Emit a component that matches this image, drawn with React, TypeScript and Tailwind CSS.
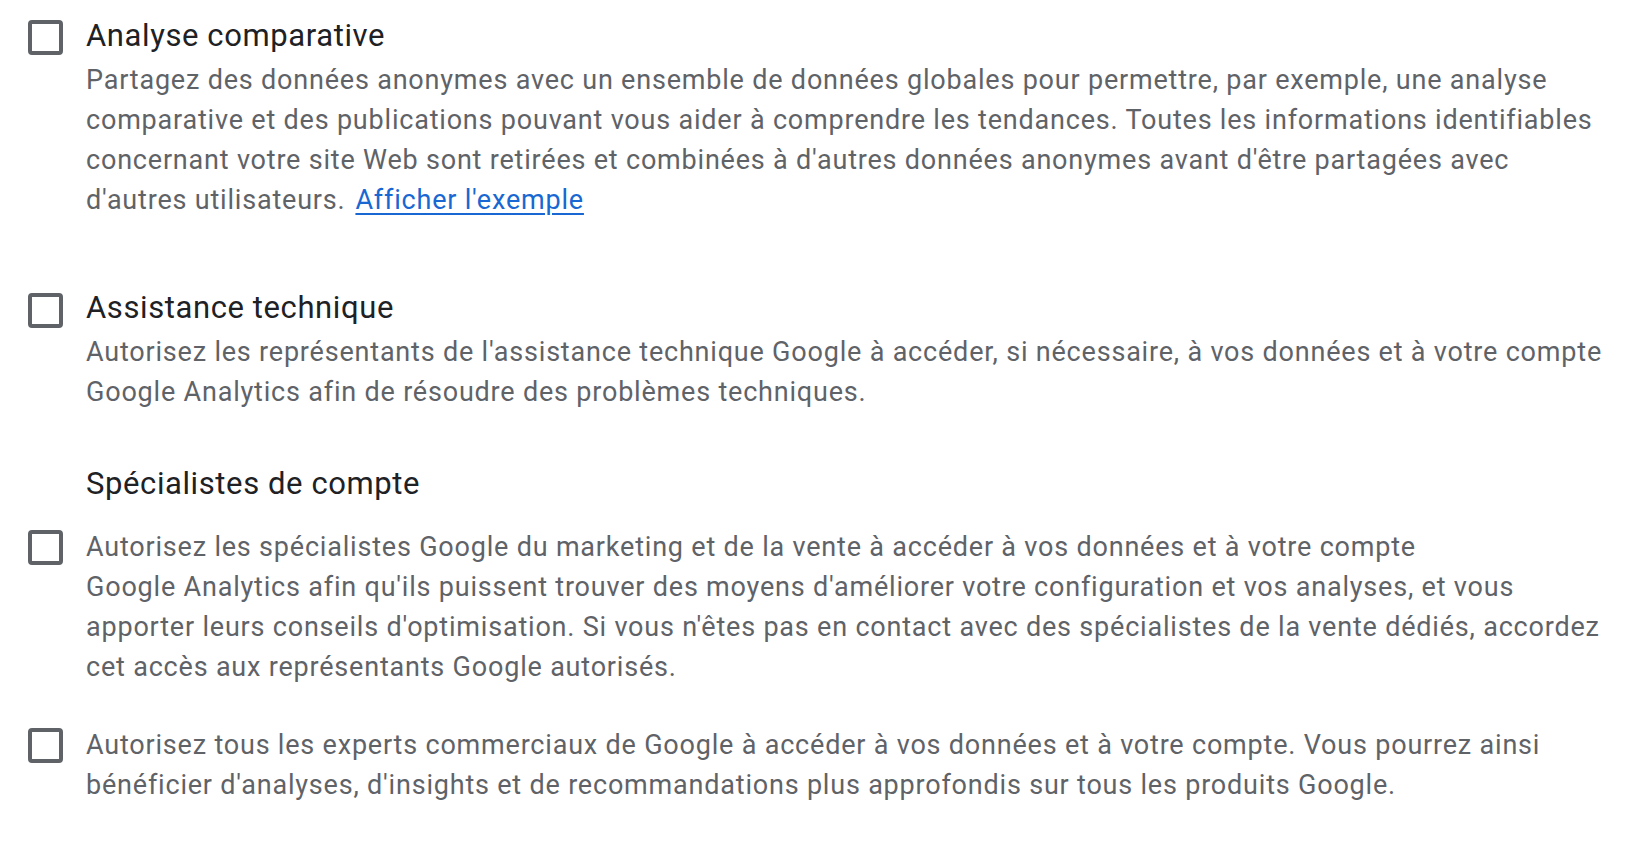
import { useState } from "react";

function Checkbox({ checked, onChange }: { checked: boolean; onChange: () => void }) {
  return (
    <button
      role="checkbox"
      aria-checked={checked}
      onClick={onChange}
      className={
        "h-[35px] w-[35px] shrink-0 rounded-[4px] border-[4px] border-[#5f6368] " +
        (checked ? "bg-[#5f6368]" : "bg-white")
      }
    />
  );
}

export default function App() {
  const [checked, setChecked] = useState<Record<string, boolean>>({});
  const toggle = (k: string) => setChecked((c) => ({ ...c, [k]: !c[k] }));

  return (
    <div className="min-h-screen bg-white pl-[28px] pr-[27px] pt-[12px] font-['Roboto',sans-serif]">
      {/* Analyse comparative */}
      <div className="flex gap-[23px]">
        <div className="pt-[8px]">
          <Checkbox checked={!!checked.bench} onChange={() => toggle("bench")} />
        </div>
        <div>
          <h3 className="text-[31px] leading-[48px] tracking-[0.6px] text-[#202124]">Analyse comparative</h3>
          <p className="text-[27px] leading-[40px] tracking-[0.8px] text-[#5f6368]">
            Partagez des données anonymes avec un ensemble de données globales pour permettre, par exemple, une
            analyse comparative et des publications pouvant vous aider à comprendre les tendances. Toutes les
            informations identifiables concernant votre site Web sont retirées et combinées à d'autres données
            anonymes avant d'être partagées avec d'autres utilisateurs.
            <a href="#" className="ml-[10px] text-[#1967d2] underline underline-offset-[4px]">
              Afficher l'exemple
            </a>
          </p>
        </div>
      </div>

      {/* Assistance technique */}
      <div className="mt-[64px] flex gap-[23px]">
        <div className="pt-[9px]">
          <Checkbox checked={!!checked.support} onChange={() => toggle("support")} />
        </div>
        <div>
          <h3 className="text-[31px] leading-[48px] tracking-[0.6px] text-[#202124]">Assistance technique</h3>
          <p className="text-[27px] leading-[40px] tracking-[0.8px] text-[#5f6368]">
            Autorisez les représentants de l'assistance technique Google à accéder, si nécessaire, à vos données et à
            votre compte Google Analytics afin de résoudre des problèmes techniques.
          </p>
        </div>
      </div>

      {/* Spécialistes de compte */}
      <h3 className="mt-[48px] pl-[58px] text-[31px] leading-[48px] tracking-[0.6px] text-[#202124]">
        Spécialistes de compte
      </h3>

      <div className="mt-[19px] flex gap-[23px]">
        <div className="pt-[3px]">
          <Checkbox checked={!!checked.sales} onChange={() => toggle("sales")} />
        </div>
        <p className="text-[27px] leading-[40px] tracking-[0.8px] text-[#5f6368]">
          Autorisez les spécialistes Google du marketing et de la vente à accéder à vos données et à votre compte
          Google{"\u00a0"}Analytics afin qu'ils puissent trouver des moyens d'améliorer votre configuration et vos
          analyses, et vous apporter leurs conseils d'optimisation. Si vous n'êtes pas en contact avec des
          spécialistes de la vente dédiés, accordez cet accès aux représentants Google autorisés.
        </p>
      </div>

      <div className="mt-[38px] flex gap-[23px]">
        <div className="pt-[3px]">
          <Checkbox checked={!!checked.experts} onChange={() => toggle("experts")} />
        </div>
        <p className="text-[27px] leading-[40px] tracking-[0.8px] text-[#5f6368]">
          Autorisez tous les experts commerciaux de Google à accéder à vos données et à votre compte. Vous pourrez
          ainsi bénéficier d'analyses, d'insights et de recommandations plus approfondis sur tous les produits Google.
        </p>
      </div>
    </div>
  );
}
